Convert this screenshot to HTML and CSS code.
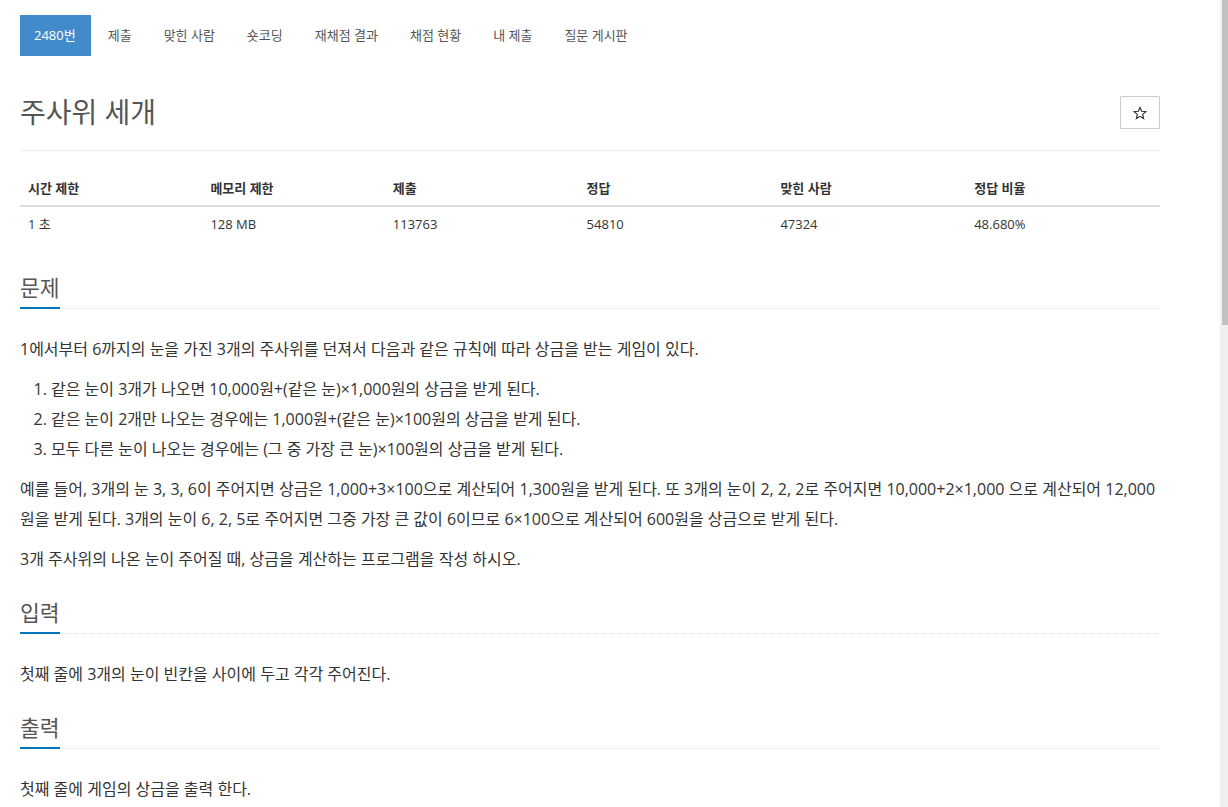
FILE: index.html
```
<!DOCTYPE html>
<html lang="ko">
<head>
  <meta charset="UTF-8" />
  <title>2480번: 주사위 세개</title>
  <link rel="stylesheet" href="styles.css">
</head>
<body>
  <div class="container">
    <ul class="nav-pills">
      <li class="active"><a href="#">2480번</a></li>
      <li><a href="#">제출</a></li>
      <li><a href="#">맞힌 사람</a></li>
      <li><a href="#">숏코딩</a></li>
      <li><a href="#">재채점 결과</a></li>
      <li><a href="#">채점 현황</a></li>
      <li><a href="#">내 제출</a></li>
      <li><a href="#">질문 게시판</a></li>
    </ul>

    <div class="page-header">
      <h1>주사위 세개</h1>
      <button class="star-btn" title="즐겨찾기">
        <svg width="14" height="14" viewBox="0 0 24 24"><path d="M12 2.5l2.9 6.6 7.1.6-5.4 4.7 1.6 7-6.2-3.7-6.2 3.7 1.6-7L2 9.7l7.1-.6z" fill="none" stroke="#333" stroke-width="2" stroke-linejoin="miter"/></svg>
      </button>
    </div>

    <table class="info-table">
      <thead>
        <tr><th>시간 제한</th><th>메모리 제한</th><th>제출</th><th>정답</th><th>맞힌 사람</th><th>정답 비율</th></tr>
      </thead>
      <tbody>
        <tr><td>1 초</td><td>128 MB</td><td>113763</td><td>54810</td><td>47324</td><td>48.680%</td></tr>
      </tbody>
    </table>

    <section class="problem-section">
      <div class="headline"><h2>문제</h2></div>
      <p>1에서부터 6까지의 눈을 가진 3개의 주사위를 던져서 다음과 같은 규칙에 따라 상금을 받는 게임이 있다.</p>
      <ol>
        <li>같은 눈이 3개가 나오면 10,000원+(같은 눈)×1,000원의 상금을 받게 된다.</li>
        <li>같은 눈이 2개만 나오는 경우에는 1,000원+(같은 눈)×100원의 상금을 받게 된다.</li>
        <li>모두 다른 눈이 나오는 경우에는 (그 중 가장 큰 눈)×100원의 상금을 받게 된다.</li>
      </ol>
      <p>예를 들어, 3개의 눈 3, 3, 6이 주어지면 상금은 1,000+3×100으로 계산되어 1,300원을 받게 된다. 또 3개의 눈이 2, 2, 2로 주어지면 10,000+2×1,000 으로 계산되어 12,000원을 받게 된다. 3개의 눈이 6, 2, 5로 주어지면 그중 가장 큰 값이 6이므로 6×100으로 계산되어 600원을 상금으로 받게 된다.</p>
      <p>3개 주사위의 나온 눈이 주어질 때, 상금을 계산하는 프로그램을 작성 하시오.</p>
    </section>

    <section class="problem-section">
      <div class="headline"><h2>입력</h2></div>
      <p>첫째 줄에 3개의 눈이 빈칸을 사이에 두고 각각 주어진다.</p>
    </section>

    <section class="problem-section">
      <div class="headline"><h2>출력</h2></div>
      <p>첫째 줄에 게임의 상금을 출력 한다.</p>
    </section>

    <section class="problem-section">
      <div class="headline"><h2>예제 입력 1</h2></div>
      <pre class="sampledata">3 3 6</pre>
    </section>
    <section class="problem-section">
      <div class="headline"><h2>예제 출력 1</h2></div>
      <pre class="sampledata">1300</pre>
    </section>
    <section class="problem-section">
      <div class="headline"><h2>예제 입력 2</h2></div>
      <pre class="sampledata">2 2 2</pre>
    </section>
    <section class="problem-section">
      <div class="headline"><h2>예제 출력 2</h2></div>
      <pre class="sampledata">12000</pre>
    </section>
    <section class="problem-section">
      <div class="headline"><h2>예제 입력 3</h2></div>
      <pre class="sampledata">6 2 5</pre>
    </section>
    <section class="problem-section">
      <div class="headline"><h2>예제 출력 3</h2></div>
      <pre class="sampledata">600</pre>
    </section>

    <section class="problem-section">
      <div class="headline"><h2>출처</h2></div>
      <ul class="source-list">
        <li>문제를 만든 사람: baekjoon</li>
        <li>데이터를 추가한 사람: jh05013</li>
      </ul>
    </section>

    <section class="problem-section">
      <div class="headline"><h2>알고리즘 분류</h2></div>
      <ul class="source-list">
        <li>수학</li>
        <li>구현</li>
        <li>사칙연산</li>
        <li>많은 조건 분기</li>
      </ul>
    </section>
  </div>

  <!-- window scrollbar as it appears in the screenshot -->
  <div class="fake-scrollbar" aria-hidden="true"><div class="fake-thumb"></div></div>
</body>
</html>
```

FILE: styles.css
```
* { box-sizing: border-box; }

body {
  margin: 0;
  font-family: "Open Sans", "Noto Sans CJK KR", sans-serif;
  font-size: 14px;
  color: #333;
  background: #fff;
}
.container {
  width: 1180px;
  padding: 15px 20px 60px;
}

/* tabs */
.nav-pills {
  display: flex;
  list-style: none;
  margin: 0;
  padding: 0;
}
.nav-pills li + li { margin-left: 2px; }
.nav-pills a {
  display: block;
  padding: 0 15px;
  height: 41px;
  line-height: 41px;
  font-size: 13px;
  color: #555;
  text-decoration: none;
}
.nav-pills .active a {
  padding: 0 15px 0 14px;
  background: #428bca;
  color: #fff;
}

/* title */
.page-header {
  display: flex;
  align-items: center;
  justify-content: space-between;
  margin-top: 40px;
  padding-bottom: 21px;
  border-bottom: 1px solid #eee;
}
.page-header h1 {
  margin: 0;
  font-size: 28px;
  font-weight: 400;
  line-height: 1.1;
  color: #555;
}
.star-btn {
  width: 40px;
  height: 33px;
  padding: 0;
  border: 1px solid #ccc;
  border-radius: 1px;
  background: #fff;
  display: flex;
  align-items: center;
  justify-content: center;
}

/* info table */
.info-table {
  width: 100%;
  table-layout: fixed;
  border-collapse: collapse;
  margin-top: 20px;
  margin-bottom: 36px;
  font-size: 13px;
}
.info-table th, .info-table td {
  text-align: left;
  padding: 8px;
  line-height: 18px;
}
.info-table th {
  width: 17%;
  font-weight: 700;
  border-bottom: 2px solid #ddd;
}
.info-table th:nth-child(1), .info-table th:nth-child(2) { width: 16%; }

/* problem body */
.problem-section + .problem-section { margin-top: 28px; }
.headline {
  border-bottom: 1px dotted #ddd;
  margin-bottom: 25px;
}
.headline h2 {
  display: inline-block;
  margin: 0 0 -1px;
  padding-bottom: 8px;
  font-size: 21.5px;
  font-weight: 400;
  line-height: 22px;
  color: #555;
  border-bottom: 2px solid #0076c0;
}
.problem-section p {
  margin: 0 0 10px;
  font-size: 16px;
  line-height: 30px;
}
.problem-section ol {
  margin: 0 0 10px;
  padding-left: 31px;
  font-size: 16px;
  line-height: 30px;
}
.sampledata {
  margin: 0 0 10px;
  padding: 9px;
  font-family: "Liberation Mono", monospace;
  font-size: 13px;
  line-height: 1.42;
  background: #f5f5f5;
  border: 1px solid #ccc;
  border-radius: 4px;
}
.source-list {
  margin: 0 0 10px;
  padding-left: 40px;
  font-size: 16px;
  line-height: 30px;
}

.fake-scrollbar {
  position: fixed;
  top: 0;
  right: 0;
  width: 8px;
  height: 100%;
  background: #f0f0f0;
}
.fake-thumb {
  margin-left: 2px;
  width: 6px;
  height: 325px;
  background: #c1c1c1;
}
```
